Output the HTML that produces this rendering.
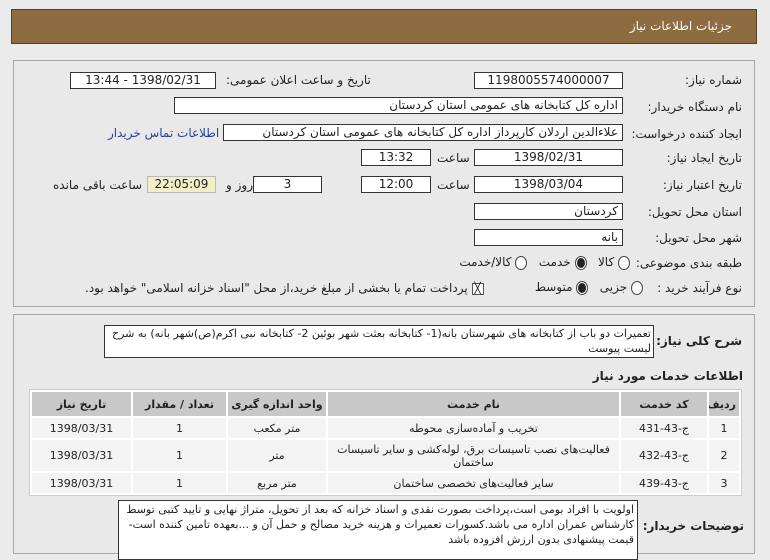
<!DOCTYPE html>
<html><head><meta charset="utf-8"><style>
*{margin:0;padding:0;box-sizing:border-box}
body{width:770px;height:545px;background:#ebebeb;font-family:Tahoma,"DejaVu Sans","Noto Sans CJK SC",sans-serif;font-size:12px;color:#222;position:relative;overflow:hidden;direction:rtl}
.a{position:absolute;white-space:nowrap}
.hdr{left:11px;top:9px;width:746px;height:35px;background:#8c6c40;border:1px solid #5a4020}
.hdr span{position:absolute;right:24px;top:9px;color:#fff;font-size:12px}
.pnl{border:1px solid #a8a8a8;background:#e9e9e9}
.f{position:absolute;background:#fff;border:1px solid #333;height:17px;font-size:12px;line-height:15px;padding:0 4px;text-align:center;white-space:nowrap;overflow:hidden}
.l{position:absolute;white-space:nowrap;font-size:12px}
.r{display:inline-block;width:12px;height:14px;border:1px solid #444;border-radius:50%;background:#fff;vertical-align:middle}
.r.on::after{content:"";display:block;width:8px;height:10px;border-radius:50%;background:#222;margin:1px}
table{border-collapse:separate;border-spacing:2px;position:absolute;left:29px;top:389px;width:713px;background:#fff;border:1px solid #ccc;table-layout:fixed}
td,th{font-size:11px;text-align:center;padding:0 3px;background:#f3f3f3;font-weight:normal;line-height:13px;white-space:nowrap;overflow:hidden}
th{background:#c8c8c8;font-weight:bold;height:24px}
</style></head><body>
<div class="a hdr"><span>جزئیات اطلاعات نیاز</span></div>
<div class="a pnl" style="left:13px;top:60px;width:742px;height:247px"></div>

<div class="l" style="right:28px;top:73px">شماره نیاز:</div>
<div class="f" style="left:474px;top:72px;width:149px">1198005574000007</div>
<div class="l" style="left:226px;top:73px">تاریخ و ساعت اعلان عمومی:</div>
<div class="f" style="left:70px;top:72px;width:146px">1398/02/31 - 13:44</div>

<div class="l" style="right:28px;top:100px">نام دستگاه خریدار:</div>
<div class="f" style="left:174px;top:97px;width:449px;text-align:right">اداره کل کتابخانه های عمومی استان کردستان</div>

<div class="l" style="right:28px;top:127px">ایجاد کننده درخواست:</div>
<div class="f" style="left:223px;top:124px;width:400px;text-align:right">علاءالدین اردلان کارپرداز اداره کل کتابخانه های عمومی استان کردستان</div>
<div class="l" style="left:108px;top:126px;color:#2a3fa0">اطلاعات تماس خریدار</div>

<div class="l" style="right:28px;top:151px">تاریخ ایجاد نیاز:</div>
<div class="f" style="left:474px;top:149px;width:149px">1398/02/31</div>
<div class="l" style="left:437px;top:151px">ساعت</div>
<div class="f" style="left:361px;top:149px;width:70px">13:32</div>

<div class="l" style="right:28px;top:178px">تاریخ اعتبار نیاز:</div>
<div class="f" style="left:474px;top:176px;width:149px">1398/03/04</div>
<div class="l" style="left:437px;top:178px">ساعت</div>
<div class="f" style="left:361px;top:176px;width:70px">12:00</div>
<div class="l" style="left:226px;top:178px">روز و</div>
<div class="f" style="left:253px;top:176px;width:69px">3</div>
<div class="f" style="left:147px;top:176px;width:69px;background:#f2efc8;border-color:#bbb">22:05:09</div>
<div class="l" style="left:53px;top:178px">ساعت باقی مانده</div>

<div class="l" style="right:28px;top:205px">استان محل تحویل:</div>
<div class="f" style="left:474px;top:203px;width:149px;text-align:right">کردستان</div>
<div class="l" style="right:28px;top:231px">شهر محل تحویل:</div>
<div class="f" style="left:474px;top:229px;width:149px;text-align:right">بانه</div>

<div class="l" style="right:28px;top:256px">طبقه بندی موضوعی:</div>
<div class="l" style="right:140px;top:255px"><span class="r"></span> کالا &nbsp; <span class="r on"></span> خدمت &nbsp; <span class="r"></span> کالا/خدمت</div>

<div class="l" style="right:28px;top:281px">نوع فرآیند خرید :</div>
<div class="l" style="right:127px;top:280px"><span class="r"></span> جزیی &nbsp; <span class="r on"></span> متوسط</div>
<div class="l" style="left:85px;top:281px"><span style="display:inline-block;width:12px;height:12px;border:1px solid #555;background:#fff;vertical-align:middle;font-size:11px;line-height:10px;text-align:center">╳</span> پرداخت تمام یا بخشی از مبلغ خرید،از محل "اسناد خزانه اسلامی" خواهد بود.</div>

<div class="a pnl" style="left:13px;top:314px;width:742px;height:240px"></div>
<div class="l" style="right:28px;top:334px;font-weight:bold">شرح کلی نیاز:</div>
<div class="a" style="left:104px;top:325px;width:550px;height:33px;background:#fff;border:1px solid #333;white-space:normal;text-align:right;line-height:15px;padding:0 2px;font-size:11px">تعمیرات دو باب از کتابخانه های شهرستان بانه(1- کتابخانه بعثت شهر بوئین 2- کتابخانه نبی اکرم(ص)شهر بانه) به شرح لیست پیوست</div>

<div class="l" style="right:27px;top:369px;font-weight:bold">اطلاعات خدمات مورد نیاز</div>
<table>
<colgroup><col style="width:30px"><col style="width:86px"><col><col style="width:98px"><col style="width:93px"><col style="width:99px"></colgroup>
<tr><th>ردیف</th><th>کد خدمت</th><th>نام خدمت</th><th>واحد اندازه گیری</th><th>تعداد / مقدار</th><th>تاریخ نیاز</th></tr>
<tr style="height:20px"><td>1</td><td>ج-43-431</td><td>تخریب و آماده‌سازی محوطه</td><td>متر مکعب</td><td>1</td><td>1398/03/31</td></tr>
<tr style="height:31px"><td>2</td><td>ج-43-432</td><td style="white-space:normal">فعالیت‌های نصب تاسیسات برق، لوله‌کشی و سایر تاسیسات ساختمان</td><td>متر</td><td>1</td><td>1398/03/31</td></tr>
<tr style="height:20px"><td>3</td><td>ج-43-439</td><td>سایر فعالیت‌های تخصصی ساختمان</td><td>متر مربع</td><td>1</td><td>1398/03/31</td></tr>
</table>

<div class="l" style="right:26px;top:519px;font-weight:bold">توضیحات خریدار:</div>
<div class="a" style="left:118px;top:500px;width:520px;height:60px;background:#fff;border:1px solid #333;white-space:normal;text-align:right;line-height:15px;padding:1px 3px;font-size:11px">اولویت با افراد بومی است،پرداخت بصورت نقدی و اسناد خزانه که بعد از تحویل، متراژ نهایی و تایید کتبی توسط کارشناس عمران اداره می باشد.کسورات تعمیرات و هزینه خرید مصالح و حمل آن و ...بعهده تامین کننده است-قیمت پیشنهادی بدون ارزش افزوده باشد</div>
</body></html>
